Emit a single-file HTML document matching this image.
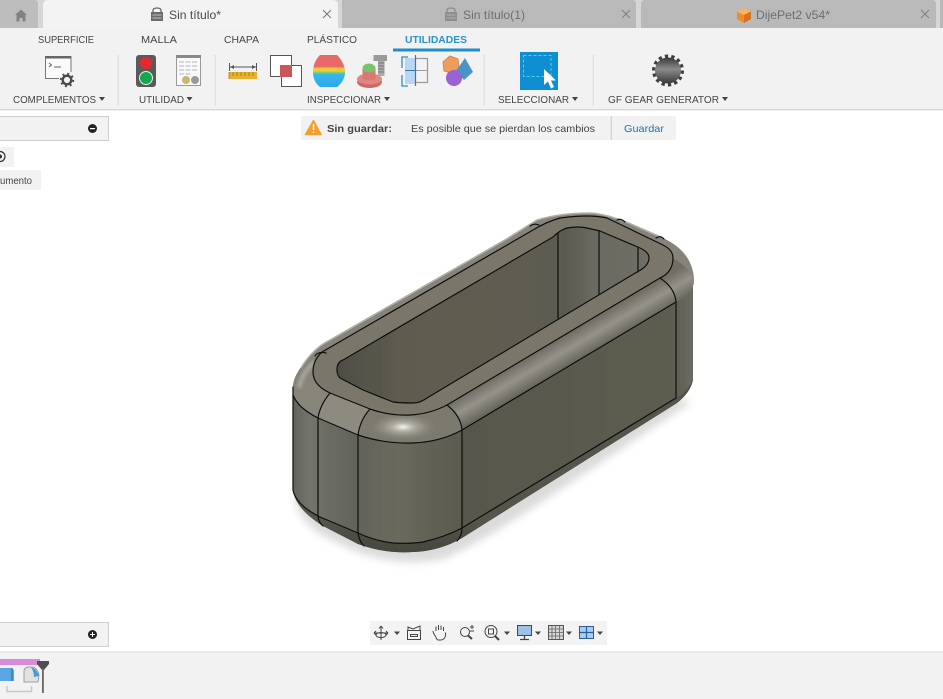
<!DOCTYPE html>
<html><head><meta charset="utf-8">
<style>
html,body{margin:0;padding:0;background:#fff;width:943px;height:699px;overflow:hidden}
svg{display:block;position:absolute;left:0;top:0}
text{font-family:"Liberation Sans",sans-serif;fill:#444}
</style></head><body>
<svg width="943" height="699" viewBox="0 0 943 699" xmlns="http://www.w3.org/2000/svg">
<defs>
<filter id="b6" x="-20%" y="-20%" width="140%" height="140%"><feGaussianBlur stdDeviation="4"/></filter>
<filter id="b2" x="-20%" y="-20%" width="140%" height="140%"><feGaussianBlur stdDeviation="1.6"/></filter>
<filter id="soft" x="-5%" y="-5%" width="110%" height="110%"><feGaussianBlur stdDeviation=".35"/></filter>
<linearGradient id="front" x1="293" x2="470" y1="0" y2="0" gradientUnits="userSpaceOnUse">
<stop offset="0" stop-color="#63645c"/><stop offset=".1" stop-color="#73746c"/><stop offset=".2" stop-color="#6b6c64"/><stop offset=".36" stop-color="#62635a"/><stop offset=".6" stop-color="#6a695c"/><stop offset=".85" stop-color="#5e5e52"/><stop offset="1" stop-color="#5b5a4f"/>
</linearGradient>
<linearGradient id="side" x1="462" x2="695" y1="0" y2="0" gradientUnits="userSpaceOnUse">
<stop offset="0" stop-color="#57574c"/><stop offset=".9" stop-color="#5c5c50"/><stop offset="1" stop-color="#6c6c62"/>
</linearGradient>
<linearGradient id="under" x1="0" x2="0" y1="520" y2="552" gradientUnits="userSpaceOnUse">
<stop offset="0" stop-color="#55554b"/><stop offset="1" stop-color="#46463d"/>
</linearGradient>
<linearGradient id="fil" x1="560" y1="338" x2="574" y2="362" gradientUnits="userSpaceOnUse">
<stop offset="0" stop-color="#6f6d62"/><stop offset=".5" stop-color="#95928a"/><stop offset="1" stop-color="#6a685d"/>
</linearGradient>
<linearGradient id="hole" x1="340" x2="650" y1="0" y2="0" gradientUnits="userSpaceOnUse">
<stop offset="0" stop-color="#4f4e45"/><stop offset=".2" stop-color="#5e5c50"/><stop offset=".6" stop-color="#5f5d51"/><stop offset=".73" stop-color="#5a5a50"/><stop offset=".82" stop-color="#6a6a62"/><stop offset="1" stop-color="#6f6e66"/>
</linearGradient>
<radialGradient id="hl" cx="403" cy="427" r="34" gradientUnits="userSpaceOnUse" gradientTransform="translate(403 427) scale(1 .4) translate(-403 -427)">
<stop offset="0" stop-color="#f2f2ec"/><stop offset=".3" stop-color="#b4b2a6"/><stop offset="1" stop-color="#8a887c" stop-opacity="0"/>
</radialGradient>
<linearGradient id="rb" x1="0" x2="0" y1="0" y2="1">
<stop offset="0" stop-color="#e8696a"/><stop offset=".36" stop-color="#e8696a"/><stop offset=".42" stop-color="#eecb3c"/><stop offset=".5" stop-color="#eecb3c"/><stop offset=".55" stop-color="#7fd06a"/><stop offset=".6" stop-color="#38b8ee"/><stop offset="1" stop-color="#2ea8e8"/>
</linearGradient>
<linearGradient id="gear" x1="0" x2="0" y1="0" y2="1"><stop offset="0" stop-color="#3a3a3a"/><stop offset=".45" stop-color="#8a8a8a"/><stop offset="1" stop-color="#3a3a3a"/></linearGradient>
</defs>

<rect width="943" height="699" fill="#fff"/>

<!-- tabs -->
<rect width="943" height="28" fill="#d6d6d6"/>
<path d="M0 28V0H35Q38 0 38 4V28Z" fill="#bdbdbd"/>
<path d="M43 28V5Q43 0 48 0H333Q338 0 338 5V28Z" fill="#f3f3f3"/>
<path d="M342 28V0H632Q636 0 636 4V28Z" fill="#b9b9b9"/>
<path d="M641 28V4Q641 0 645 0H932Q936 0 936 4V28Z" fill="#b9b9b9"/>
<rect x="940" y="0" width="3" height="28" fill="#b9b9b9"/>
<!-- home -->
<path d="M21 9.500L15 15H16.500V21.500H19.500V18H22.500V21.500H25.500V15H27Z" fill="#828282"/>
<!-- lock 1 -->
<path d="M153 12V10.500Q153 8 157 8T161 10.500V12" fill="none" stroke="#666" stroke-width="1.300"/>
<rect x="151" y="12" width="12" height="9" fill="#6a6a6a"/><path d="M152.500 15H161.500M152.500 18H161.500" stroke="#ddd" stroke-width=".8"/>
<text x="169" y="19" font-size="12" textLength="52" lengthAdjust="spacingAndGlyphs" style="fill:#4a4a4a">Sin título*</text>
<path d="M323 10L331 18M331 10L323 18" stroke="#777" stroke-width="1"/>
<!-- lock 2 -->
<path d="M447 12V10.500Q447 8 451 8T455 10.500V12" fill="none" stroke="#8a8a8a" stroke-width="1.300"/>
<rect x="445" y="12" width="12" height="9" fill="#8e8e8e"/><path d="M446.500 15H455.500M446.500 18H455.500" stroke="#bbb" stroke-width=".8"/>
<text x="463" y="19" font-size="12" textLength="62" lengthAdjust="spacingAndGlyphs" style="fill:#6e6e6e">Sin título(1)</text>
<path d="M622 10L630 18M630 10L622 18" stroke="#808080" stroke-width="1"/>
<!-- cube -->
<path d="M744 8L751 11.500V19L744 23L737 19V11.500Z" fill="#ef8c2c"/><path d="M744 8L751 11.500L744 15L737 11.500Z" fill="#f8b26a"/><path d="M744 15L751 11.500V19L744 23Z" fill="#d9701a"/>
<text x="756" y="19" font-size="12" textLength="74" lengthAdjust="spacingAndGlyphs" style="fill:#6e6e6e">DijePet2 v54*</text>
<path d="M921 10L929 18M929 10L921 18" stroke="#808080" stroke-width="1"/>

<!-- ribbon -->
<rect y="28" width="943" height="81" fill="#f2f2f2"/>
<rect y="109" width="943" height="1.500" fill="#d9d9d9"/>
<g font-size="10">
<text x="38" y="43" textLength="56" lengthAdjust="spacingAndGlyphs">SUPERFICIE</text>
<text x="141" y="43" textLength="36" lengthAdjust="spacingAndGlyphs">MALLA</text>
<text x="224" y="43" textLength="35" lengthAdjust="spacingAndGlyphs">CHAPA</text>
<text x="307" y="43" textLength="50" lengthAdjust="spacingAndGlyphs">PLÁSTICO</text>
<text x="405" y="43" textLength="62" lengthAdjust="spacingAndGlyphs" font-weight="bold" style="fill:#2a93cc">UTILIDADES</text>
<text x="13" y="103" textLength="83" lengthAdjust="spacingAndGlyphs">COMPLEMENTOS</text>
<text x="139" y="103" textLength="45" lengthAdjust="spacingAndGlyphs">UTILIDAD</text>
<text x="307" y="103" textLength="74" lengthAdjust="spacingAndGlyphs">INSPECCIONAR</text>
<text x="498" y="103" textLength="71" lengthAdjust="spacingAndGlyphs">SELECCIONAR</text>
<text x="608" y="103" textLength="111" lengthAdjust="spacingAndGlyphs">GF GEAR GENERATOR</text>
</g>
<rect x="393" y="48.500" width="87" height="3" fill="#1f8ecb"/>
<g fill="#444">
<path d="M99 97H105L102 101Z"/><path d="M186.500 97H192.500L189.500 101Z"/><path d="M384 97H390L387 101Z"/><path d="M572 97H578L575 101Z"/><path d="M722 97H728L725 101Z"/>
</g>
<g fill="#e2e2e2">
<rect x="117.500" y="55" width="1.500" height="51"/><rect x="214.500" y="55" width="1.500" height="51"/><rect x="483.500" y="55" width="1.500" height="51"/><rect x="592.500" y="55" width="1.500" height="51"/>
</g>
<!-- complementos icon -->
<path d="M71 72V56.500H45.500V78.500H59" fill="#fafafa" stroke="#777"/>
<rect x="45" y="56" width="26" height="2.500" fill="#666"/>
<path d="M49 63L51.500 65L49 67M54 67H61" fill="none" stroke="#666"/>
<circle cx="67" cy="80" r="4.300" fill="none" stroke="#4a4a4a" stroke-width="2.400"/>
<circle cx="67" cy="80" r="6.300" fill="none" stroke="#4a4a4a" stroke-width="1.800" stroke-dasharray="2 2.950"/>
<!-- traffic -->
<rect x="136" y="55" width="20" height="32" rx="3" fill="#5a5a5a"/>
<circle cx="146" cy="63" r="6" fill="#e8282a"/>
<circle cx="146" cy="78" r="6.500" fill="#12a84f" stroke="#e8f0e8" stroke-width="1"/>
<!-- table -->
<rect x="176.500" y="55.500" width="24" height="30" fill="#f9f9f9" stroke="#999"/>
<rect x="176" y="55" width="25" height="3" fill="#888"/>
<path d="M179 62H198M179 66H198M179 70H198M179 74H190" stroke="#c5cdd5" stroke-width="1.500" stroke-dasharray="5 1.500"/>
<circle cx="186" cy="80" r="4" fill="#c9b76e"/><circle cx="195" cy="80" r="4" fill="#9a9a9a"/>
<!-- ruler -->
<rect x="229" y="72" width="28" height="7" fill="#e9b02c"/>
<path d="M229 72V79M233 72V76M237 72V76M241 72V76M245 72V76M249 72V76M253 72V76" stroke="#8a6d1a" stroke-width=".7"/>
<path d="M229.500 63V71M256.500 63V71M230 67H256" stroke="#555"/><path d="M230 67L234 65V69ZM256 67L252 65V69Z" fill="#555"/>
<!-- interference -->
<path d="M270.500 55.500H291.500V76.500H270.500Z" fill="#fff" stroke="#555"/>
<path d="M281.500 65.500H301.500V86.500H281.500Z" fill="#fff" stroke="#555"/>
<rect x="280" y="65" width="12" height="12" fill="#c9565a"/>
<!-- rainbow -->
<path d="M320 55H337C342 60 345 66 345 72C345 78 342 83 337 87H320C315 83 313 78 313 72C313 66 315 60 320 55Z" fill="url(#rb)"/>
<!-- section analysis -->
<rect x="378" y="60" width="6.500" height="16" fill="#aaa"/><path d="M378 63H384.500M378 66H384.500M378 69H384.500M378 72H384.500" stroke="#777"/>
<rect x="373.500" y="55" width="13.500" height="6" fill="#9a9a9a"/>
<ellipse cx="369.500" cy="82" rx="12.500" ry="6" fill="#c96a66"/>
<ellipse cx="369.500" cy="79" rx="12.500" ry="5.500" fill="#e08880"/>
<path d="M362.500 79V69H375.500V79Q369 82 362.500 79Z" fill="#d87a70"/>
<ellipse cx="369" cy="68" rx="6.500" ry="4.500" fill="#77c46c"/>
<!-- grid -->
<path d="M402 68V57H408M408 86H402V75" fill="none" stroke="#2a8fc6" stroke-width="1.300"/>
<rect x="405" y="58" width="10" height="26" fill="#b9d7f2"/>
<path d="M415.500 55V86" stroke="#2a7fb0" stroke-width="1.200"/>
<path d="M405 70.500H428" stroke="#2a7fb0"/>
<path d="M416 58.500H427.500V82.500H416" fill="none" stroke="#9a9a9a" stroke-width="1.200"/><path d="M416 70.500H428" stroke="#9a9a9a"/>
<!-- shapes -->
<path d="M450 56L458 59L459 68L451 73L444 71L443 62Z" fill="#ef9c5e" stroke="#d98a50"/>
<path d="M465 58L473 72L464 80L456 71Z" fill="#4a94c8"/>
<circle cx="454" cy="78" r="8" fill="#9a62d2"/>
<!-- select -->
<rect x="520" y="52" width="38" height="38" fill="#0f8fd2"/>
<rect x="523.500" y="55.500" width="27.500" height="21" fill="none" stroke="#45d8de" stroke-dasharray="3 2"/>
<path d="M544 69V85L548 81.500L551 88.500L554 87L551 80.500H556Z" fill="#fff"/>
<!-- gear -->
<g transform="translate(668 70.500)">
<circle r="14" fill="none" stroke="#3f3f3f" stroke-width="4" stroke-dasharray="3.200 3.080"/>
<circle r="13" fill="url(#gear)"/>
</g>

<!-- model -->
<path d="M294 495Q298 528 340 544Q385 568 440 560Q470 550 560 490L692 402L660 395L400 530Z" fill="#cfcfcf" filter="url(#b6)" opacity=".75"/>
<g filter="url(#soft)">
<!-- body left/front -->
<path d="M293 388V490C294 500 302 513 323 526L358 544Q385 554 413 552Q440 551 462 538L462 430L358 435L318 418Z" fill="url(#front)"/>
<path d="M462 425L676 300L693 275V380Q691 392 677 403L462 538Z" fill="url(#side)"/>
<path d="M293 490Q296 505 320 517L358 533Q375 541 393 543Q410 544 423 542Q445 537 462 528L676 398Q688 392 693 378Q691 392 677 403L462 538Q440 551 413 552Q385 554 358 544L323 526C302 513 294 500 293 490Z" fill="url(#under)"/>
<!-- top fillet silhouette -->
<path d="M293 395V385Q295 368 323 344L505 240L537 220Q560 213 590 213Q610 214 640 228L663 238Q693 252 694 280Q692 294 676 302L462 430Q440 442 413 443Q385 444 358 435L318 418Q297 408 293 395Z" fill="#85837a"/>
<path d="M301 368Q310 353 323 344L505 240L537 220Q560 213 590 213Q610 214 640 228L663 238" fill="none" stroke="#b0b0a8" stroke-width="1.600"/>
<path d="M462 430L676 302Q690 298 694 283Q693 270 673 258L660 278L447 405Z" fill="url(#fil)"/>
<path d="M293 392Q296 370 316 360L330 393Q320 405 318 418Q298 408 293 392Z" fill="#87857a"/>
<path d="M299 388Q302 372 315 362" fill="none" stroke="#a9a89f" stroke-width="4" filter="url(#b2)"/>
<path d="M318 418Q320 400 330 393L370 409Q360 420 358 435Z" fill="#8d8b7f"/>
<path d="M358 435Q360 418 370 409Q392 418 413 415Q435 414 447 405Q460 415 462 430Q435 443 413 443Q385 444 358 435Z" fill="#7b796e"/>
<ellipse cx="403" cy="427" rx="34" ry="14" fill="url(#hl)"/>
<!-- top ring -->
<path d="M313 372Q313 360 322 352L533 230Q546 222 560 218Q590 214 607 218L663 245Q673 250 673 258Q673 272 660 278L447 405Q430 414 410 415Q390 416 370 409L330 393Q313 385 313 372Z" fill="#7a776b"/>
<!-- hole -->
<path d="M337 370Q337 362 343 360L553 237Q560 230 567 228Q578 226 587 228L600 231L640 248Q649 252 649 258Q649 266 637 272L427 398Q420 403 413 403Q400 403 393 402L363 390L340 378Q337 375 337 370Z" fill="url(#hole)"/>
<!-- lines -->
<g fill="none" stroke="#111" stroke-width="1.200" stroke-linecap="round" stroke-linejoin="round">
<path d="M313 372Q313 360 322 352L533 230Q546 222 560 218Q590 214 607 218L663 245Q673 250 673 258Q673 272 660 278L447 405Q430 414 410 415Q390 416 370 409L330 393Q313 385 313 372Z"/>
<path d="M337 370Q337 362 343 360L553 237Q560 230 567 228Q578 226 587 228L600 231L640 248Q649 252 649 258Q649 266 637 272L427 398Q420 403 413 403Q400 403 393 402L363 390L340 378Q337 375 337 370Z"/>
<path d="M558 233V318M599 231V294M638 248V272"/>
<path d="M293 387V490Q296 505 320 517L358 533Q375 541 393 543Q410 544 423 542Q445 537 462 528L676 398"/>
<path d="M293 395Q298 408 318 418L358 435Q385 444 413 443Q440 442 462 430L676 302"/>
<path d="M330 393Q320 405 318 418V517Q319 523 323 526"/>
<path d="M370 409Q360 420 358 435V533Q359 541 364 546"/>
<path d="M447 405Q461 416 462 430V528Q462 536 457 541"/>
<path d="M660 278Q675 288 676 302V398"/>
<path d="M315 356Q318 351 326 353M530 226Q534 223 539 225M617 220Q621 218 625 222M656 238Q660 235 664 239"/>
</g>
</g>

<!-- warning bar -->
<rect x="301" y="116" width="375" height="24" fill="#f2f2f2"/>
<rect x="610.500" y="116" width="1.500" height="24" fill="#d5d5d5"/>
<path d="M313.500 120.500L321 134.500H305.500Z" fill="#f2a02c" stroke="#f2a02c" stroke-width="1.500" stroke-linejoin="round"/>
<path d="M313.500 124V130M313.500 131.500V133" stroke="#fff" stroke-width="1.400"/>
<text x="327" y="132" font-size="10.500" font-weight="bold" textLength="65" lengthAdjust="spacingAndGlyphs">Sin guardar:</text>
<text x="411" y="132" font-size="10.500" textLength="184" lengthAdjust="spacingAndGlyphs">Es posible que se pierdan los cambios</text>
<text x="624" y="132" font-size="10.500" textLength="40" lengthAdjust="spacingAndGlyphs" style="fill:#1e73a8">Guardar</text>

<!-- left panels -->
<rect x="-2" y="116.500" width="110.500" height="24" fill="#f2f2f2" stroke="#cfcfcf"/>
<circle cx="92.500" cy="128.500" r="4.500" fill="#222"/><rect x="90" y="128" width="5" height="1.200" fill="#fff"/>
<rect x="0" y="147" width="14" height="20" fill="#f2f2f2"/>
<circle cx="0" cy="156.500" r="5" fill="none" stroke="#333" stroke-width="1.200"/><circle cx="0" cy="156.500" r="2" fill="#333"/>
<rect x="0" y="170" width="41" height="20" fill="#f2f2f2"/>
<text x="0" y="184" font-size="10.500" textLength="32" lengthAdjust="spacingAndGlyphs">umento</text>
<rect x="-2" y="622.500" width="110.500" height="24" fill="#f2f2f2" stroke="#cfcfcf"/>
<circle cx="92.500" cy="634.500" r="4.500" fill="#222"/><path d="M90 634.500H95M92.500 632V637" stroke="#fff"/>

<!-- nav bar -->
<rect x="370" y="621" width="237" height="24" fill="#f3f3f3"/>
<g fill="none" stroke="#444">
<path d="M381 626V640M381 626L379 628.500M381 626L383 628.500M374 633H388M374 633L376 631M374 633L376 635M388 633L386 631M388 633L386 635" />
<ellipse cx="381" cy="635" rx="5" ry="2.500"/>
<rect x="407.500" y="630.500" width="13" height="9"/><path d="M408 630V627L413 629L420 626V630M410.500 634.500H417.500V636.500H410.500Z"/>
<path d="M436 637Q433 633 433 631M436 631V626.500M438.500 630V625M441 630V625.500M443.500 631V627M445.500 632.500V636Q444 640 441 640H438Q436 639 436 637"/>
<circle cx="465" cy="632" r="4.500"/><path d="M468 635.500L472 639" stroke-width="2"/><path d="M470 627H474M472 625V629M470 631H474"/>
<circle cx="491" cy="631.500" r="6"/><rect x="488.500" y="629" width="5" height="5"/><path d="M495 636L499 640" stroke-width="2"/>
</g>
<rect x="517.500" y="625.500" width="14" height="10" fill="#9cc0e6" stroke="#3a4a5c"/><path d="M524.500 636V639M520 639.500H529" stroke="#444" stroke-width="1.300"/>
<rect x="548.500" y="625.500" width="15" height="14" fill="#d5d5d5" stroke="#555"/><path d="M552 626V639M555.500 626V639M559.500 626V639M549 629H563M549 632.500H563M549 636H563" stroke="#666" stroke-width=".8"/>
<rect x="579.500" y="626.500" width="14" height="12" fill="#a8cdf0" stroke="#2b5e96"/><path d="M586.500 627V638M580 632.500H593" stroke="#2b5e96" stroke-width="1.200"/>
<g fill="#444"><path d="M394 631.500H400L397 635Z"/><path d="M504 631.500H510L507 635Z"/><path d="M535 631.500H541L538 635Z"/><path d="M566 631.500H572L569 635Z"/><path d="M597 631.500H603L600 635Z"/></g>

<!-- timeline -->
<rect y="652" width="943" height="47" fill="#f2f2f2"/>
<rect y="651.500" width="943" height="1" fill="#dcdcdc"/>
<rect x="0" y="659" width="40" height="6" fill="#d98ad9"/>
<path d="M0 668H12L14 670V681H0Z" fill="#5aa6e2"/><path d="M12 668V681" stroke="#2a6ea8"/>
<path d="M24 671Q24 668 28 667H33Q38 669 39 675L38 682H24Z" fill="#dfe3e6" stroke="#888" stroke-width=".8"/>
<path d="M31 667Q37 669 39 676L34 677Q34 672 31 667Z" fill="#4a9ad8"/>
<path d="M7 686V691.500H31.500V686" fill="none" stroke="#c8c8c8" stroke-width="1.500"/>
<path d="M37 661H49V664L44 670H42L37 664Z" fill="#4f4f4f"/>
<rect x="42" y="668" width="1.800" height="25" fill="#666"/>
</svg>
</body></html>
